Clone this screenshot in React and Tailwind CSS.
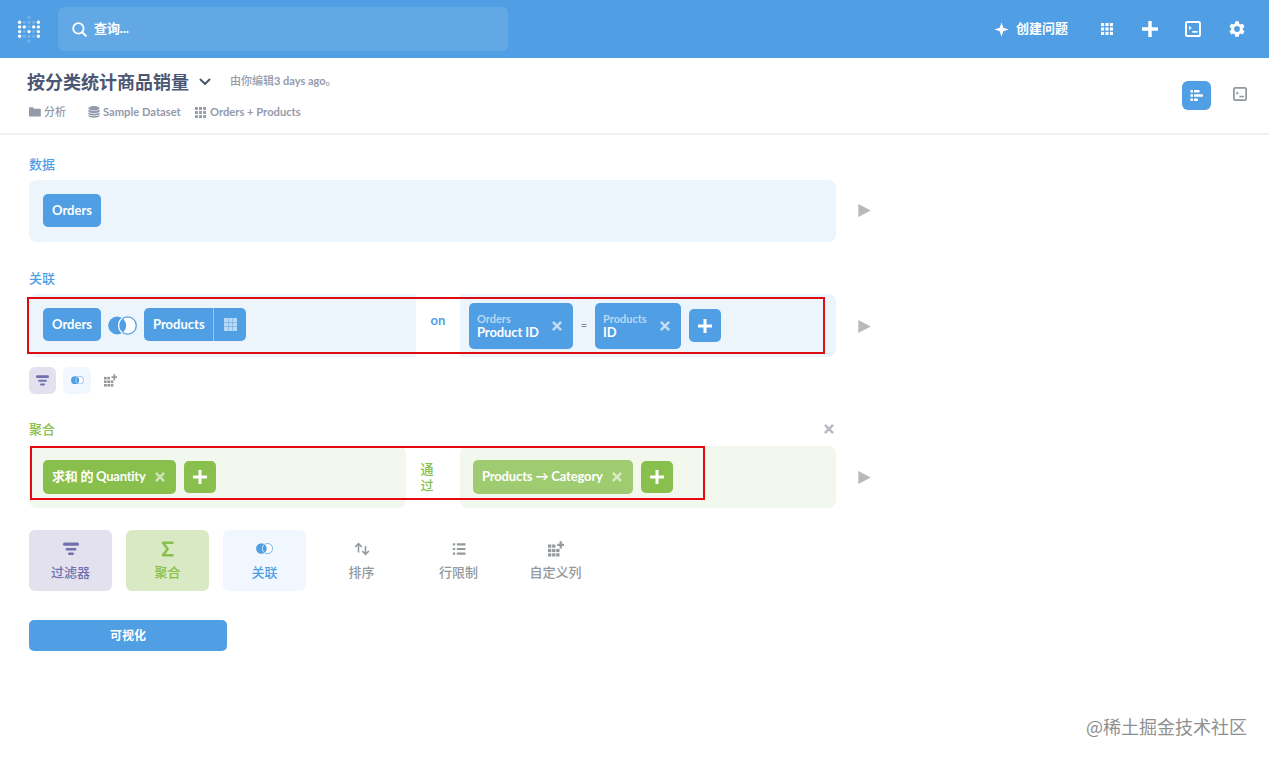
import { Fragment } from 'react';

const Icon = ({ size = 16, box = 32, className = '', children }) => (
  <svg
    width={size}
    height={size}
    viewBox={`0 0 ${box} ${box}`}
    fill="currentColor"
    className={`shrink-0 ${className}`}
    aria-hidden="true"
  >
    {children}
  </svg>
);

const PlusIcon = ({ size = 14 }) => (
  <Icon size={size} box={14}>
    <path d="M5.5 0h3v5.5H14v3H8.5V14h-3V8.5H0v-3h5.5z" />
  </Icon>
);

const CloseIcon = ({ className }) => (
  <Icon size={12} box={12} className={className}>
    <path d="M1.9 1.9l8.2 8.2M10.1 1.9l-8.2 8.2" stroke="currentColor" strokeWidth="2.5" />
  </Icon>
);

const TableIcon = ({ size = 12, gap = 4.5, cell = 3.2, className }) => (
  <Icon size={size} box={12.2} className={className}>
    {[0, 1, 2].map((r) =>
      [0, 1, 2].map((c) => <rect key={`${r}${c}`} x={c * gap} y={r * gap} width={cell} height={cell} />)
    )}
  </Icon>
);

const ConsoleIcon = ({ size = 16 }) => (
  <Icon size={size} box={16}>
    <rect x="1" y="1" width="14" height="14" rx="1.6" fill="none" stroke="currentColor" strokeWidth="2" />
    <path d="M4 4.8l2.8 2.1L4 9z" />
    <rect x="7.2" y="10" width="5.4" height="1.7" />
  </Icon>
);

const JoinIcon = ({ width = 29, className = '' }) => (
  <svg
    width={width}
    height={(width * 19) / 29}
    viewBox="0 0 29 19"
    className={`shrink-0 ${className}`}
    fill="none"
    aria-hidden="true"
  >
    <circle cx="19.6" cy="9.500" r="8.700" fill="white" stroke="currentColor" strokeWidth="1.3" />
    <circle cx="9.200" cy="9.500" r="9" fill="currentColor" />
    <path d="M14.3 2.300a8.900 8.900 0 0 0 0 14.400" stroke="white" strokeWidth="1.3" />
  </svg>
);

const FilterIcon = ({ size = 16 }) => (
  <Icon size={size} box={16}>
    <rect x="0" y="1.6" width="16" height="3.2" rx="1.5" />
    <rect x="2.6" y="7" width="10.8" height="2.4" rx="1.2" />
    <rect x="5" y="11.6" width="6" height="2.4" rx="1.2" />
  </Icon>
);

const SumIcon = () => (
  <Icon size={16} box={16}>
    <path
      d="M12.5 1.700H3l4.600 6.300L3 14.300h9.500"
      fill="none"
      stroke="currentColor"
      strokeWidth="2.6"
      strokeLinecap="round"
      strokeLinejoin="round"
    />
  </Icon>
);

const SortIcon = () => (
  <Icon size={16} box={16}>
    <path
      d="M4.5 11.5V3M1.2 6l3.3-3.3L7.8 6M11.5 5v8M8.2 10l3.3 3.3 3.3-3.3"
      fill="none"
      stroke="currentColor"
      strokeWidth="1.6"
    />
  </Icon>
);

const ListIcon = () => (
  <Icon size={14} box={14}>
    {[1.2, 5.9, 10.6].map((y) => (
      <Fragment key={y}>
        <rect x="0.8" y={y} width="2.4" height="2.2" rx="0.5" />
        <rect x="4.8" y={y} width="8.7" height="2.2" rx="0.4" />
      </Fragment>
    ))}
  </Icon>
);

const AddColumnIcon = ({ size = 16 }) => (
  <Icon size={size} box={16}>
    {[3.5, 7.9, 12.3].map((y, r) =>
      [0, 4.1, 8.2].map((x, c) =>
        r === 0 && c === 2 ? null : <rect key={`${x}${y}`} x={x} y={y} width="3.3" height="3.2" />
      )
    )}
    <path d="M11.6 0.2h2.2v2.6h2.200V5h-2.200v2.600h-2.200V5H9.200V2.800h2.400z" />
  </Icon>
);

// column, row, opacity
const LOGO = [
  [0, 0, 1], [1, 0, 0.2], [2, 0, 0.2], [3, 0, 0.2], [4, 0, 1],
  [0, 1, 1], [1, 1, 1], [2, 1, 0.2], [3, 1, 1], [4, 1, 1],
  [0, 2, 1], [1, 2, 0.2], [2, 2, 1], [3, 2, 0.2], [4, 2, 1],
  [0, 3, 1], [1, 3, 0.2], [2, 3, 0.2], [3, 3, 0.2], [4, 3, 1],
  [2, -1, 0.2], [2, 4, 0.2],
];

const Logo = () => (
  <svg width="24" height="28" viewBox="0 0 24 28" fill="white" className="shrink-0" aria-hidden="true">
    {LOGO.map(([x, y, o]) => (
      <circle key={`${x}${y}`} cx={2.6 + x * 4.7} cy={7.2 + y * 4.7} r="1.7" opacity={o} />
    ))}
  </svg>
);

const Chip = ({ className = '', children }) => (
  <div className={`flex shrink-0 items-center rounded-[5px] text-[13px] text-white ${className}`}>{children}</div>
);

const FieldChip = ({ table, field, className = '' }) => (
  <div
    className={`flex h-[46px] shrink-0 items-center justify-between rounded-[5px] bg-[#509ee3] pr-[10px] pl-[8px] text-white ${className}`}
  >
    <div className="flex flex-col pt-[1px]">
      <span className="text-[11px] leading-[12px] text-white/60">{table}</span>
      <span className="text-[13px] leading-[15px] tracking-[-0.1px]">{field}</span>
    </div>
    <CloseIcon className="text-white/65" />
  </div>
);

const RunButton = ({ className = '' }) => (
  <Icon size={13} box={13} className={`ml-[22px] text-[#b8b9bd] ${className}`}>
    <path d="M0.3 0v13L12.8 6.5z" />
  </Icon>
);

const STEPS = [
  { label: '过滤器', icon: <FilterIcon />, className: 'bg-[#e2e1ed] text-[#7172ad]' },
  { label: '聚合', icon: <SumIcon />, className: 'bg-[#d9e9c4] text-[#88bf4d]' },
  { label: '关联', icon: <JoinIcon width={17} />, className: 'bg-[#f0f7fe] text-[#509ee3]' },
  { label: '排序', icon: <SortIcon />, className: 'text-[#93999d]' },
  { label: '行限制', icon: <ListIcon />, className: 'text-[#93999d]' },
  { label: '自定义列', icon: <AddColumnIcon />, className: 'text-[#93999d]' },
];

function NavBar() {
  return (
    <header className="flex h-[58px] items-center bg-[#509ee3] pr-[24px] pl-[17px] text-white">
      <Logo />
      <div className="ml-[17px] flex h-[44px] w-[450px] items-center gap-[7px] rounded-md bg-[#62a8e5] pl-[14px]">
        <Icon size={15} box={15}>
          <circle cx="6.4" cy="6.4" r="5.2" fill="none" stroke="currentColor" strokeWidth="1.8" />
          <path d="M10.2 10.2l3.6 3.6" stroke="currentColor" strokeWidth="2" strokeLinecap="round" />
        </Icon>
        <span className="text-[13px] tracking-[-0.1px]">查询...</span>
      </div>
      <div className="ml-auto flex items-center">
        <Icon size={15} box={16}>
          <path d="M8 0.5l1.9 5.600L15.5 8 9.900 9.900 8 15.5 6.100 9.900 0.5 8l5.600-1.900z" />
        </Icon>
        <span className="ml-[7px] w-[92px] text-[13px]">创建问题</span>
        <TableIcon size={12} className="-ml-[7px]" />
        <div className="ml-[29px] flex">
          <PlusIcon size={16} />
        </div>
        <div className="ml-[27px] flex">
          <ConsoleIcon />
        </div>
        <Icon size={16} box={24} className="ml-[28px] scale-[1.2]">
          <path d="M19.14 12.94c.04-.3.06-.61.06-.94s-.02-.64-.07-.94l2.03-1.58a.49.49 0 0 0 .12-.61l-1.92-3.32a.49.49 0 0 0-.59-.22l-2.39.96a7 7 0 0 0-1.62-.94l-.36-2.54A.48.48 0 0 0 13.92 2.4h-3.84a.48.48 0 0 0-.47.41l-.36 2.54c-.59.24-1.13.57-1.62.94l-2.39-.96a.48.48 0 0 0-.59.22L2.74 8.87a.48.48 0 0 0 .12.61l2.03 1.58c-.05.3-.09.63-.09.94s.02.64.07.94l-2.03 1.58a.49.49 0 0 0-.12.61l1.92 3.32c.12.22.37.29.59.22l2.39-.96c.5.38 1.03.7 1.62.94l.36 2.54c.05.24.24.41.48.41h3.84c.24 0 .44-.17.47-.41l.36-2.54c.59-.24 1.13-.56 1.62-.94l2.39.96c.22.08.47 0 .59-.22l1.92-3.32a.48.48 0 0 0-.12-.61zM12 15.6A3.6 3.6 0 1 1 12 8.4a3.6 3.6 0 0 1 0 7.2z" />
        </Icon>
      </div>
    </header>
  );
}

function QuestionHeader() {
  return (
    <div className="flex h-[77px] justify-between border-b-2 border-[#eeeff0] pr-[22px] pl-[27px]">
      <div className="flex flex-col pt-[12px]">
        <div className="flex h-[24px] items-center">
          <h1 className="text-[18px] text-[#4c5773]">按分类统计商品销量</h1>
          <Icon size={12} box={12} className="ml-[10px] text-[#4c5773]">
            <path
              d="M1.5 3.5L6 8l4.5-4.5"
              fill="none"
              stroke="currentColor"
              strokeWidth="2"
              strokeLinecap="round"
              strokeLinejoin="round"
            />
          </Icon>
          <span className="relative -top-px ml-[19px] text-[11px] font-medium text-[#949aab]">
            由你编辑<span className="font-bold">3 days ago</span>。
          </span>
        </div>
        <div className="mt-[8px] flex h-[20px] items-center pl-[2px] text-[11px] text-[#949aab]">
          <Icon size={12} box={12}>
            <path d="M0 1.8a.6.6 0 0 1 .6-.6h3.2l1.4 1.5h5.8a.8.8 0 0 1 .8.8V10a.6.6 0 0 1-.6.6H.6A.6.6 0 0 1 0 10z" />
          </Icon>
          <span className="ml-[3px] w-[43px] font-medium">分析</span>
          <Icon size={12} box={12} className="ml-[1px]">
            <ellipse cx="6" cy="2.2" rx="5.6" ry="2.1" />
            <path d="M.4 3.6c1.5 1.6 9.7 1.6 11.2 0v1.9c-1 2-10.2 2-11.2 0zM.4 6.5c1.5 1.6 9.7 1.6 11.2 0v1.5c-1 2-10.2 2-11.2 0zM.4 9c1.5 1.6 9.7 1.6 11.2 0v1c-1 2.3-10.2 2.3-11.2 0z" />
          </Icon>
          <span className="ml-[3px] w-[91px] text-[11.2px]">Sample Dataset</span>
          <TableIcon size={11} className="ml-[1px]" />
          <span className="ml-[4px] text-[11.2px]">Orders + Products</span>
        </div>
      </div>
      <div className="flex gap-[22px] pt-[23px]">
        <div className="flex h-[29px] w-[29px] items-center justify-center rounded-md bg-[#509ee3] text-white">
          <Icon size={13} box={13}>
            <rect x="0.5" y="1" width="2.4" height="2.6" />
            <rect x="4" y="1" width="5.5" height="2.6" rx="0.6" />
            <rect x="0.5" y="5.2" width="2.4" height="2.6" />
            <rect x="4" y="5.2" width="9" height="2.6" rx="0.6" />
            <rect x="0.5" y="9.4" width="2.4" height="2.6" />
            <rect x="4" y="9.4" width="4" height="2.6" rx="0.6" />
          </Icon>
        </div>
        <div className="pt-[6px] text-[#93979f]">
          <ConsoleIcon size={14} />
        </div>
      </div>
    </div>
  );
}

export default function App() {
  return (
    <div
      className="relative h-[759px] w-[1269px] overflow-hidden bg-white font-bold"
      style={{ fontFamily: "Lato, 'Noto Sans CJK SC', sans-serif" }}
    >
      <NavBar />
      <QuestionHeader />

      <main className="flex flex-col pl-[29px]">
        <section className="pt-[19px]">
          <h2 className="h-[20px] text-[13px] leading-[20px] font-medium text-[#509ee3]">数据</h2>
          <div className="mt-[6px] flex items-start">
            <div className="flex h-[62px] w-[807px] items-start rounded-lg bg-[#edf5fc] pt-[14px] pl-[14px]">
              <Chip className="h-[33px] w-[58px] justify-center bg-[#509ee3]">Orders</Chip>
            </div>
            <RunButton className="mt-[24px]" />
          </div>
        </section>

        <section className="pt-[26px]">
          <h2 className="h-[20px] text-[13px] leading-[20px] font-medium text-[#509ee3]">关联</h2>
          <div className="mt-[6px] flex items-start">
            <div className="flex h-[63px] w-[387px] items-start rounded-l-lg bg-[#edf5fc] pt-[14px] pl-[14px]">
              <Chip className="h-[33px] w-[58px] justify-center bg-[#509ee3]">Orders</Chip>
              <JoinIcon className="mx-[7px] mt-[8px] text-[#509ee3]" />
              <Chip className="h-[33px] bg-[#509ee3]">
                <span className="w-[69px] pl-[9px]">Products</span>
                <span className="flex h-full w-[33px] items-center justify-center border-l border-white/40">
                  <TableIcon size={13} gap={4.2} cell={3.8} className="text-white/60" />
                </span>
              </Chip>
            </div>
            <div className="flex h-[63px] w-[44px] justify-center pt-[16px] text-[13px] leading-[20px] text-[#509ee3]">on</div>
            <div className="flex h-[63px] w-[376px] items-center rounded-r-lg bg-[#edf5fc] pl-[9px]">
              <FieldChip table="Orders" field="Product ID" className="w-[104px]" />
              <span className="w-[22px] text-center text-[11px] font-normal text-[#7d8592]">=</span>
              <FieldChip table="Products" field="ID" className="w-[86px]" />
              <Chip className="ml-[8px] h-[33px] w-[32px] justify-center bg-[#509ee3]">
                <PlusIcon />
              </Chip>
            </div>
            <RunButton className="mt-[26px]" />
          </div>
          <div className="mt-[9px] flex h-[28px] items-center gap-[7px]">
            <div className="flex h-[27px] w-[27px] items-center justify-center rounded-md bg-[#e2e1ed] text-[#7172ad]">
              <FilterIcon size={13} />
            </div>
            <div className="flex h-[27px] w-[28px] items-center justify-center rounded-md bg-[#f0f7fe] text-[#509ee3]">
              <JoinIcon width={13} />
            </div>
            <div className="flex h-[27px] w-[25px] items-center justify-center text-[#93999d]">
              <AddColumnIcon size={13} />
            </div>
          </div>
        </section>

        <section className="pt-[25px]">
          <div className="flex h-[20px] w-[807px] items-center justify-between pr-[1px]">
            <h2 className="text-[13px] leading-[20px] font-medium text-[#88bf4d]">聚合</h2>
            <CloseIcon className="text-[#b8bbc3]" />
          </div>
          <div className="mt-[7px] flex items-center">
            <div className="flex h-[62px] w-[377px] items-center rounded-lg bg-[#f2f8ed] pl-[14px]">
              <Chip className="h-[34px] w-[133px] justify-between bg-[#88bf4d] pr-[10px] pl-[9px]">
                <span className="tracking-[-0.25px] whitespace-nowrap">求和 的 Quantity</span>
                <CloseIcon className="text-white/60" />
              </Chip>
              <Chip className="ml-[8px] h-[32px] w-[32px] justify-center bg-[#88bf4d]">
                <PlusIcon />
              </Chip>
            </div>
            <div className="flex w-[54px] justify-center pr-[11px] text-[13px] leading-[16px] font-medium text-[#88bf4d]">
              <span className="w-[14px]">通过</span>
            </div>
            <div className="flex h-[62px] w-[376px] items-center rounded-lg bg-[#f2f8ed] pl-[13px]">
              <Chip className="h-[34px] w-[160px] justify-between bg-[#a0cc71] pr-[10px] pl-[9px]">
                <span className="tracking-[-0.15px] whitespace-nowrap">Products → Category</span>
                <CloseIcon className="text-white/60" />
              </Chip>
              <Chip className="ml-[8px] h-[32px] w-[32px] justify-center bg-[#88bf4d]">
                <PlusIcon />
              </Chip>
            </div>
            <RunButton />
          </div>
        </section>

        <div className="mt-[22px] flex gap-[14px]">
          {STEPS.map((step) => (
            <button
              key={step.label}
              className={`flex h-[61px] w-[83px] flex-col items-center rounded-md pt-[11px] ${step.className}`}
            >
              <span className="flex h-[16px] items-center">{step.icon}</span>
              <span className="mt-[5px] text-[13px] leading-[20px] font-medium">{step.label}</span>
            </button>
          ))}
        </div>

        <button className="mt-[29px] h-[31px] w-[198px] rounded-[5px] bg-[#509ee3] text-[12px] text-white">可视化</button>
      </main>

      {/* highlight frames over the join and summarize rows */}
      <div className="absolute top-[297px] left-[27px] h-[57px] w-[798px] border-2 border-[#dc0d12]" />
      <div className="absolute top-[446px] left-[30px] h-[54px] w-[675px] border-2 border-[#e60a0f]" />

      <div
        className="absolute top-[713px] right-[22px] text-[18px] leading-[26px] font-normal text-[#8f8f8f]"
        style={{ fontFamily: "'Noto Sans CJK SC', sans-serif" }}
      >
        @稀土掘金技术社区
      </div>
    </div>
  );
}
